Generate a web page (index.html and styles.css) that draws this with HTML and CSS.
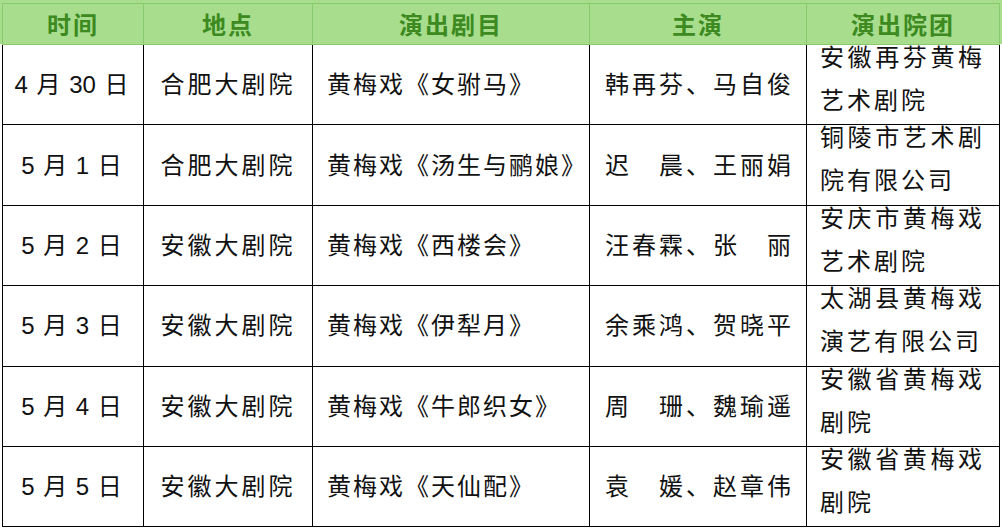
FILE: index.html
```html
<!DOCTYPE html>
<html lang="zh-CN">
<head>
<meta charset="utf-8">
<title>演出安排</title>
<link rel="stylesheet" href="styles.css">
</head>
<body>
<div class="sheet">
  <table class="schedule">
    <colgroup>
      <col class="c-date"><col class="c-place"><col class="c-show"><col class="c-cast"><col class="c-troupe">
    </colgroup>
    <thead>
      <tr class="head">
        <th>时间</th><th>地点</th><th>演出剧目</th><th>主演</th><th>演出院团</th>
      </tr>
    </thead>
    <tbody>
      <tr>
        <td class="date">4 月 30 日</td>
        <td class="place">合肥大剧院</td>
        <td class="show">黄梅戏《女驸马》</td>
        <td class="cast">韩再芬、马自俊</td>
        <td class="troupe"><div class="troupe-text">安徽再芬黄梅艺术剧院</div></td>
      </tr>
      <tr>
        <td class="date">5 月 1 日</td>
        <td class="place">合肥大剧院</td>
        <td class="show">黄梅戏《汤生与鹂娘》</td>
        <td class="cast">迟　晨、王丽娟</td>
        <td class="troupe"><div class="troupe-text">铜陵市艺术剧院有限公司</div></td>
      </tr>
      <tr>
        <td class="date">5 月 2 日</td>
        <td class="place">安徽大剧院</td>
        <td class="show">黄梅戏《西楼会》</td>
        <td class="cast">汪春霖、张　丽</td>
        <td class="troupe"><div class="troupe-text">安庆市黄梅戏艺术剧院</div></td>
      </tr>
      <tr>
        <td class="date">5 月 3 日</td>
        <td class="place">安徽大剧院</td>
        <td class="show">黄梅戏《伊犁月》</td>
        <td class="cast">余乘鸿、贺晓平</td>
        <td class="troupe"><div class="troupe-text">太湖县黄梅戏演艺有限公司</div></td>
      </tr>
      <tr>
        <td class="date">5 月 4 日</td>
        <td class="place">安徽大剧院</td>
        <td class="show">黄梅戏《牛郎织女》</td>
        <td class="cast">周　珊、魏瑜遥</td>
        <td class="troupe"><div class="troupe-text">安徽省黄梅戏剧院</div></td>
      </tr>
      <tr>
        <td class="date">5 月 5 日</td>
        <td class="place">安徽大剧院</td>
        <td class="show">黄梅戏《天仙配》</td>
        <td class="cast">袁　媛、赵章伟</td>
        <td class="troupe"><div class="troupe-text">安徽省黄梅戏剧院</div></td>
      </tr>
    </tbody>
  </table>
</div>
</body>
</html>
```

FILE: styles.css
```css
html, body {
  margin: 0;
  padding: 0;
  background: #ffffff;
}

.sheet {
  width: 1002px;
  height: 530px;
  box-sizing: border-box;
  padding: 3px 3px 0 2px;
  background: linear-gradient(#a7dd8d 0, #a7dd8d 44px, #ffffff 44px);
}

.schedule {
  border-collapse: collapse;
  table-layout: fixed;
  width: 997px;
  font-family: "Liberation Sans", "Noto Sans CJK SC", sans-serif;
  font-size: 24px;
  color: #111111;
  letter-spacing: 3px;
}

.c-date { width: 141px; }
.c-place { width: 169px; }
.c-show { width: 277px; }
.c-cast { width: 217px; }
.c-troupe { width: 193px; }

.head th {
  height: 40px;
  padding: 0;
  background: #a7dd8d;
  border: 1px solid #88c96c;
  color: #3c8a20;
  font-family: "Noto Sans CJK SC", sans-serif;
  font-weight: 700;
  letter-spacing: 2px;
  text-align: center;
  vertical-align: middle;
  line-height: 40px;
}

.schedule tbody tr {
  height: 80.4px;
}

.schedule td {
  border: 1px solid #000000;
  padding: 0;
  vertical-align: middle;
  white-space: nowrap;
  line-height: 43px;
}

.date,
.place {
  text-align: center;
}

.schedule td.date {
  letter-spacing: 0;
  word-spacing: 2px;
  padding-right: 3px;
}

.schedule td.show {
  text-align: left;
  padding-left: 14px;
  letter-spacing: 2px;
}

.schedule td.cast {
  text-align: left;
  padding-left: 15px;
}

.schedule td.troupe {
  vertical-align: top;
  white-space: normal;
  padding: 0 14px 0 13px;
}

.troupe-text {
  margin-top: -9px;
  line-height: 43px;
  text-align: justify;
}
```
